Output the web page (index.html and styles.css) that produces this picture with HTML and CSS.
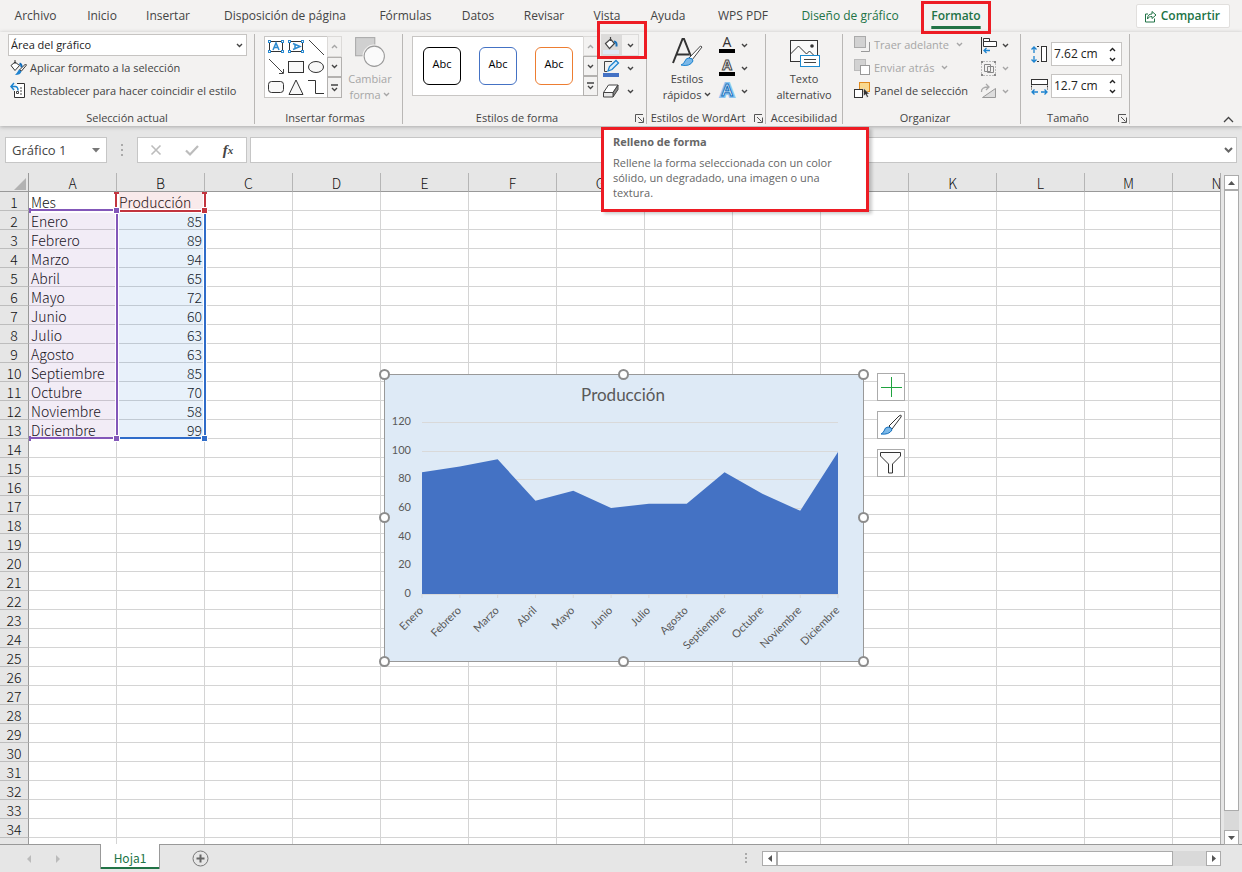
FILE: index.html
```html
<!DOCTYPE html>
<html lang="es">
<head>
<meta charset="utf-8">
<title>Hoja de cálculo</title>
<link rel="stylesheet" href="styles.css">
</head>
<body>
<svg class="defs" width="0" height="0" aria-hidden="true">
  <symbol id="chev" viewBox="0 0 7 5"><path d="M1 1l2.500 2.500L6 1" fill="none" stroke="currentColor" stroke-width="1.400"/></symbol>
  <symbol id="up" viewBox="0 0 7 5"><path d="M1 4l2.500-2.500L6 4" fill="none" stroke="currentColor" stroke-width="1.400"/></symbol>
  <symbol id="more" viewBox="0 0 9 8"><path d="M1 1h7M2 4l2.500 2.500L7 4" fill="none" stroke="currentColor" stroke-width="1.300"/></symbol>
  <symbol id="launch" viewBox="0 0 9 9"><path d="M.5 8V.5H8M3 3l4.500 4.500M8.500 3.500v5h-5" fill="none" stroke="#555"/></symbol>
</svg>
<div class="app">
  <header class="tabs">
    <nav class="tablist" aria-label="Cinta de opciones">
      <button>Archivo</button><button>Inicio</button><button>Insertar</button><button>Disposición de página</button><button>Fórmulas</button><button>Datos</button><button>Revisar</button><button>Vista</button><button>Ayuda</button><button>WPS PDF</button><button class="green">Diseño de gráfico</button><button class="active">Formato</button>
    </nav>
    <button class="share"><svg width="13" height="13" viewBox="0 0 13 13"><path d="M4 4H1.500v8h9V8.500M3.500 9c0-3.500 1.500-5 4.500-5V1.500L12 5 8 8.500V6.500C6 6.500 4.500 7 3.500 9z" fill="none" stroke="#217346"/></svg>Compartir</button>
  </header>

  <section class="ribbon">
    <div class="group g-sel">
      <div class="body">
        <div class="combo"><select aria-label="Elemento del gráfico"><option>Área del gráfico</option></select><svg width="7" height="5"><use href="#chev"/></svg></div>
        <button class="cmd"><svg width="17" height="17" viewBox="0 0 17 17"><path d="M5 1v4M1 6.500l4-3.500 4.500 3.500-4.500 5z" fill="#fff" stroke="#333"/><path d="M9.500 4.500q2.500 1 2 4" fill="none" stroke="#0f6cbd" stroke-width="2"/><path d="M15.500 5l1 1-5 6-2-1z" fill="#fff" stroke="#333"/><path d="M9 10.500l2.500 2q-1 3.500-6.500 3.500 2-2 4-5.500z" fill="#1f83d0"/></svg>Aplicar formato a la selección</button>
        <button class="cmd"><svg width="17" height="17" viewBox="0 0 17 17"><path d="M7 1.500h7.500v14h-10V9" fill="#fff" stroke="#333"/><path d="M1 4.500h4q3 0 3 4M4 1L1 4.500 4 8" fill="none" stroke="#1a83d0" stroke-width="1.500"/><path d="M10 6h2M6.500 9.500h2v2h-2zM10 12h2M10 9h2" fill="none" stroke="#444"/></svg>Restablecer para hacer coincidir el estilo</button>
      </div>
      <h2>Selección actual</h2>
    </div>

    <div class="group g-ins">
      <div class="body row">
        <div class="gallery shapes">
          <div class="cells">
            <svg width="20" height="20" viewBox="0 0 20 20"><rect x="3.500" y="4.500" width="13" height="10" fill="#fff" stroke="#333"/><g fill="#fff" stroke="#2b8ad0"><rect x="2.500" y="3.500" width="2" height="2"/><rect x="15.500" y="3.500" width="2" height="2"/><rect x="2.500" y="13.500" width="2" height="2"/><rect x="15.500" y="13.500" width="2" height="2"/></g><path d="M7 13l3-7 3 7M8 10.500h4" fill="none" stroke="#2b8ad0" stroke-width="1.500"/></svg>
            <svg width="20" height="20" viewBox="0 0 20 20"><rect x="3.500" y="4.500" width="13" height="10" fill="#fff" stroke="#333"/><g fill="#fff" stroke="#2b8ad0"><rect x="2.500" y="3.500" width="2" height="2"/><rect x="15.500" y="3.500" width="2" height="2"/><rect x="2.500" y="13.500" width="2" height="2"/><rect x="15.500" y="13.500" width="2" height="2"/></g><path d="M7 6.500l7 3-7 3M9 7.500v4" fill="none" stroke="#2b8ad0" stroke-width="1.500"/></svg>
            <svg width="20" height="20" viewBox="0 0 20 20"><path d="M3 3l15 15" stroke="#444"/></svg>
            <svg width="20" height="20" viewBox="0 0 20 20"><path d="M3 2l14 14M17.500 12v4.500H13" fill="none" stroke="#444"/></svg>
            <svg width="20" height="20" viewBox="0 0 20 20"><rect x="2.500" y="4.500" width="15" height="11" fill="#f8f8f8" stroke="#333"/></svg>
            <svg width="20" height="20" viewBox="0 0 20 20"><ellipse cx="10" cy="10" rx="7.500" ry="5.500" fill="#f8f8f8" stroke="#333"/></svg>
            <svg width="20" height="20" viewBox="0 0 20 20"><rect x="2.500" y="4.500" width="15" height="11" rx="3" fill="#f8f8f8" stroke="#333"/></svg>
            <svg width="20" height="20" viewBox="0 0 20 20"><path d="M10 3L3 17.500h14z" fill="#f8f8f8" stroke="#333"/></svg>
            <svg width="20" height="20" viewBox="0 0 20 20"><path d="M2 3.500h7.500v13H18" fill="none" stroke="#333"/></svg>
          </div>
          <div class="scroll"><button class="off" aria-label="Subir"><svg width="7" height="5"><use href="#up"/></svg></button><button aria-label="Bajar"><svg width="7" height="5"><use href="#chev"/></svg></button><button aria-label="Más"><svg width="9" height="8"><use href="#more"/></svg></button></div>
        </div>
        <button class="big off"><svg width="30" height="30" viewBox="0 0 30 30"><rect x="1.500" y="1.500" width="18" height="17" fill="#d0d0d0" stroke="#aaa"/><circle cx="19" cy="19" r="11" fill="#f3f2f1"/><circle cx="19" cy="19" r="9.500" fill="#fafafa" stroke="#999"/></svg><span>Cambiar<br>forma <svg width="7" height="5"><use href="#chev"/></svg></span></button>
      </div>
      <h2>Insertar formas</h2>
    </div>

    <div class="group g-sty">
      <div class="body row">
        <div class="gallery styles">
          <div class="cells"><button class="abc black">Abc</button><button class="abc blue">Abc</button><button class="abc orange">Abc</button></div>
          <div class="scroll"><button class="off" aria-label="Subir"><svg width="7" height="5"><use href="#up"/></svg></button><button aria-label="Bajar"><svg width="7" height="5"><use href="#chev"/></svg></button><button aria-label="Más"><svg width="9" height="8"><use href="#more"/></svg></button></div>
        </div>
        <div class="stack">
          <div class="split fill">
            <button aria-label="Relleno de forma"><svg width="18" height="18" viewBox="0 0 18 18"><path d="M8.500 1v4M3.500 7.500l5-4.500 4 4.500-5 5z" fill="#fff" stroke="#444" stroke-width="1.200"/><path d="M12 5.500q3 0 2.500 5" fill="none" stroke="#1c72b8" stroke-width="2"/><rect x="1" y="14" width="16" height="4" fill="#deeaf6"/></svg></button><button class="drop" aria-label="Opciones de relleno"><svg width="7" height="5"><use href="#chev"/></svg></button>
            <div class="mark"></div>
            <div class="tip" role="tooltip"><strong>Relleno de forma</strong><p>Rellene la forma seleccionada con un color sólido, un degradado, una imagen o una textura.</p></div>
          </div>
          <div class="split">
            <button aria-label="Contorno de forma"><svg width="18" height="18" viewBox="0 0 18 18"><path d="M10 2.500H2.500v10H5" fill="none" stroke="#444"/><path d="M6 12l1.500-4.500L14 1.500l2.500 2.500L10 10.500z" fill="#d9ecfa" stroke="#1c83cf" stroke-width="1.300"/><rect x="1" y="14" width="16" height="4" fill="#4472c4"/></svg></button><button class="drop" aria-label="Opciones de contorno"><svg width="7" height="5"><use href="#chev"/></svg></button>
          </div>
          <div class="split">
            <button aria-label="Efectos de forma"><svg width="18" height="18" viewBox="0 0 18 18"><path d="M1.500 10.500l5-7.500h9.500l-5 7.500z" fill="#fff" stroke="#444"/><path d="M11 10.500L16 3v4.500l-5 7.500z" fill="#888" stroke="#444"/><path d="M1.500 10.500H11V15H1.500z" fill="#e8e8e8" stroke="#444"/></svg></button><button class="drop" aria-label="Opciones de efectos"><svg width="7" height="5"><use href="#chev"/></svg></button>
          </div>
        </div>
      </div>
      <h2>Estilos de forma</h2><button class="launch" aria-label="Más opciones de forma"><svg width="9" height="9"><use href="#launch"/></svg></button>
    </div>

    <div class="group g-art">
      <div class="body row">
        <button class="big"><svg width="32" height="32" viewBox="0 0 32 32"><path d="M2 27L11.500 3h1.500l8 20M6 18.500h12" fill="none" stroke="#333" stroke-width="2"/><path d="M29.500 10l1.500 1-10 13-3-2z" fill="#fff" stroke="#444"/><path d="M18 22q4 0 4 3-3 6-12 4 3-1 4-4 1-3 4-3z" fill="#7bb8e8" stroke="#1c83cf"/></svg><span>Estilos<br>rápidos <svg width="7" height="5"><use href="#chev"/></svg></span></button>
        <div class="stack">
          <div class="split"><button aria-label="Relleno de texto"><svg width="18" height="18" viewBox="0 0 18 18"><text class="ltr" x="9" y="11" fill="#333">A</text><rect x="1" y="13" width="16" height="4"/></svg></button><button class="drop" aria-label="Opciones de relleno de texto"><svg width="7" height="5"><use href="#chev"/></svg></button></div>
          <div class="split"><button aria-label="Contorno de texto"><svg width="18" height="18" viewBox="0 0 18 18"><text class="ltr heavy" x="9" y="11" fill="#fff" stroke="#444">A</text><rect x="1" y="13" width="16" height="4"/></svg></button><button class="drop" aria-label="Opciones de contorno de texto"><svg width="7" height="5"><use href="#chev"/></svg></button></div>
          <div class="split"><button aria-label="Efectos de texto"><svg width="18" height="18" viewBox="0 0 18 18"><text class="ltr large" x="9" y="14" fill="#fff" stroke="#8bc4f0" stroke-width="4">A</text><text class="ltr large" x="9" y="14" fill="#fff" stroke="#1671bd">A</text></svg></button><button class="drop" aria-label="Opciones de efectos de texto"><svg width="7" height="5"><use href="#chev"/></svg></button></div>
        </div>
      </div>
      <h2>Estilos de WordArt</h2><button class="launch" aria-label="Más opciones de WordArt"><svg width="9" height="9"><use href="#launch"/></svg></button>
    </div>

    <div class="group g-acc">
      <div class="body row">
        <button class="big"><svg width="32" height="32" viewBox="0 0 32 32"><rect x="2.500" y="4.500" width="27" height="21" fill="#fafafa" stroke="#333"/><path d="M2.500 18l8-8 8 8 3-3 4 4" fill="none" stroke="#333"/><circle cx="24" cy="10" r="1.800" fill="#333"/><rect x="12.500" y="19.500" width="19" height="11" fill="#fff" stroke="#1c8ad0"/><path d="M16 23.500h12M16 26.500h12" stroke="#444"/></svg><span>Texto<br>alternativo</span></button>
      </div>
      <h2>Accesibilidad</h2>
    </div>

    <div class="group g-org">
      <div class="body row">
        <div class="stack wide">
          <button class="cmd off"><svg width="17" height="17" viewBox="0 0 17 17"><path d="M7 15.500h8.500V6" fill="none" stroke="#999"/><rect x=".5" y=".5" width="11" height="11" fill="#d2d2d2" stroke="#aaa"/></svg>Traer adelante <svg class="ch" width="7" height="5"><use href="#chev"/></svg></button>
          <button class="cmd off"><svg width="17" height="17" viewBox="0 0 17 17"><rect x=".5" y=".5" width="11" height="11" fill="#d2d2d2" stroke="#bbb"/><rect x="6.500" y="6.500" width="9" height="9" fill="#fff" stroke="#999"/></svg>Enviar atrás <svg class="ch" width="7" height="5"><use href="#chev"/></svg></button>
          <button class="cmd"><svg width="17" height="17" viewBox="0 0 17 17"><rect x="5.500" y=".5" width="10" height="9" fill="#f9d98e" stroke="#e08a1e"/><rect x=".5" y="7.500" width="8" height="8" fill="#fff" stroke="#333"/><path d="M9.500 6v8l2-1.500 1.500 3 1.500-1-1.500-2.500h2.500z" fill="#333" stroke="#fff" stroke-width=".5"/></svg>Panel de selección</button>
        </div>
        <div class="stack">
          <div class="split"><button aria-label="Alinear"><svg width="17" height="17" viewBox="0 0 17 17"><path d="M1.500 0v17M3.500 1.500h6v3h-6zM3.500 4.500h13v5h-13z" fill="#fff" stroke="#333"/><path d="M4 13.500h6M6.500 11L4 13.500 6.500 16" fill="none" stroke="#1c83cf" stroke-width="1.300"/></svg></button><button class="drop" aria-label="Opciones de alinear"><svg width="7" height="5"><use href="#chev"/></svg></button></div>
          <div class="split off"><button aria-label="Agrupar"><svg width="17" height="17" viewBox="0 0 17 17"><path d="M3 1.500h11M3 15.500h11M1.500 3v11M15.500 3v11" stroke="#bbb" stroke-dasharray="2 1"/><path d="M1 1h2v2H1zM14 1h2v2h-2zM1 14h2v2H1zM14 14h2v2h-2z" fill="#888"/><path d="M4.500 4.500h6v7h-6zM7.500 6.500h6v6h-6z" fill="none" stroke="#888"/></svg></button><button class="drop" aria-label="Opciones de agrupar"><svg width="7" height="5"><use href="#chev"/></svg></button></div>
          <div class="split off"><button aria-label="Girar"><svg width="17" height="17" viewBox="0 0 17 17"><path d="M1.500 9Q1 4 8.500 4M6 1l3 3-3 3" fill="none" stroke="#aaa" stroke-width="1.300"/><path d="M2.500 14.500l13-9v9z" fill="#ddd" stroke="#999"/></svg></button><button class="drop" aria-label="Opciones de girar"><svg width="7" height="5"><use href="#chev"/></svg></button></div>
        </div>
      </div>
      <h2>Organizar</h2>
    </div>

    <div class="group g-size">
      <div class="body sizes">
        <label class="size"><svg width="17" height="17" viewBox="0 0 17 17"><path d="M3 1v6M3 10v6M.5 3.500L3 1l2.500 2.500M.5 13.500L3 16l2.500-2.500" fill="none" stroke="#1c83cf" stroke-width="1.300"/><path d="M6 .5h3M6 15.500h3" stroke="#333" stroke-dasharray="2 1"/><rect x="10.500" y=".5" width="5" height="15" fill="#fff" stroke="#333"/></svg><span class="num"><input value="7.62 cm" aria-label="Alto de forma"><span class="spin"><svg width="7" height="5"><use href="#up"/></svg><svg width="7" height="5"><use href="#chev"/></svg></span></span></label>
        <label class="size"><svg width="17" height="17" viewBox="0 0 17 17"><rect x=".5" y="1.500" width="16" height="5" fill="#fff" stroke="#333"/><path d="M.5 7.500v4M16.500 7.500v4" stroke="#333" stroke-dasharray="2 1"/><path d="M1 14h6M10 14h6M3.500 11.500L1 14l2.500 2.500M13.500 11.500L16 14l-2.500 2.500" fill="none" stroke="#1c83cf" stroke-width="1.300"/></svg><span class="num"><input value="12.7 cm" aria-label="Ancho de forma"><span class="spin"><svg width="7" height="5"><use href="#up"/></svg><svg width="7" height="5"><use href="#chev"/></svg></span></span></label>
      </div>
      <h2>Tamaño</h2><button class="launch" aria-label="Más opciones de tamaño"><svg width="9" height="9"><use href="#launch"/></svg></button>
    </div>
    <button class="collapse" aria-label="Contraer la cinta"><svg width="11" height="7" viewBox="0 0 11 7"><path d="M1 6l4.500-4.500L10 6" fill="none" stroke="#444" stroke-width="1.300"/></svg></button>
  </section>

  <section class="formula">
    <div class="namebox"><input value="Gráfico 1" aria-label="Cuadro de nombres"><svg width="8" height="5" viewBox="0 0 8 5"><path d="M0 0h8L4 4.500z" fill="#777"/></svg></div>
    <svg class="dots" width="3" height="12" viewBox="0 0 3 12"><path d="M0 0h2v2H0zM0 5h2v2H0zM0 10h2v2H0z" fill="#aaa"/></svg>
    <div class="fxbox">
      <button aria-label="Cancelar"><svg width="12" height="12" viewBox="0 0 12 12"><path d="M1.500 1.500l9 9M10.500 1.500l-9 9" stroke="#bcbcbc" stroke-width="1.600"/></svg></button>
      <button aria-label="Introducir"><svg width="14" height="12" viewBox="0 0 14 12"><path d="M1 6.500l4 4L13 2" fill="none" stroke="#bcbcbc" stroke-width="2.200"/></svg></button>
      <button class="fx" aria-label="Insertar función">f<sub>x</sub></button>
    </div>
    <div class="fbar"><input aria-label="Barra de fórmulas"><svg width="9" height="6" viewBox="0 0 9 6"><path d="M1 1l3.500 3.500L8 1" fill="none" stroke="#666" stroke-width="2"/></svg></div>
  </section>

  <main class="work">
    <div class="sheet">
      <table id="grid"></table>
      <svg class="ranges" width="220" height="280" viewBox="0 0 220 280">
        <rect x="29" y="38" width="88" height="228" fill="#7030a0" fill-opacity=".09"/>
        <rect x="117" y="38" width="88" height="228" fill="#2f7cd0" fill-opacity=".11"/>
        <rect x="117" y="19" width="88" height="19" fill="#c0303c" fill-opacity=".1"/>
        <g fill="none" stroke="#fff" stroke-width="4"><path d="M29 38H117V266H29M117 266H205V38M117 19V38H205V19"/></g>
        <g fill="none" stroke-width="2"><path d="M29 37H117V265H29" stroke="#8357b9"/><path d="M118 265H205V38" stroke="#2f6cc9"/><path d="M116 19V38H205V19" stroke="#c2353f"/></g>
        <g stroke="#fff"><path d="M113.500 262.500h6v6h-6zM113.500 34.500h6v6h-6z" fill="#8357b9"/><path d="M201.500 262.500h6v6h-6z" fill="#2f6cc9"/><path d="M201.500 34.500h6v6h-6z" fill="#c2353f"/></g>
        <path d="M29 35h2v5h-2zM29 263h2v5h-2z" fill="#8357b9"/><path d="M114 19h5v2h-5zM202 19h5v2h-5z" fill="#c2353f"/>
      </svg>
      <div class="chart">
        <svg id="chart" width="490" height="298" viewBox="-5 -5 490 298" role="img" aria-label="Gráfico de áreas Producción"></svg>
        <div class="tools">
          <button aria-label="Elementos de gráfico"><svg width="22" height="22" viewBox="0 0 22 22"><path d="M11 1h1v20h-1zM1 11h21v1H1z" fill="#1fa33f"/></svg></button>
          <button aria-label="Estilos de gráfico"><svg width="24" height="22" viewBox="0 0 24 22"><path d="M10 12L20 2q3-2 2 1l-9 12z" fill="#fff" stroke="#333"/><path d="M9 13q4 0 4 3-3 5-11 4 2-1 3-3 1-4 4-4z" fill="#7bb8e8" stroke="#1671bd"/></svg></button>
          <button aria-label="Filtros de gráfico"><svg width="22" height="22" viewBox="0 0 22 22"><path d="M.5 .5h20V4l-8 8v9h-4v-9l-8-8z" fill="#fafafa" stroke="#333"/></svg></button>
        </div>
      </div>
    </div>
    <div class="vbar"><button aria-label="Subir"><svg width="7" height="4" viewBox="0 0 7 4"><path d="M0 4h7L3.500 0z" fill="#555"/></svg></button><div class="track"><div class="thumb"></div></div><button aria-label="Bajar"><svg width="7" height="4" viewBox="0 0 7 4"><path d="M0 0h7L3.500 4z" fill="#555"/></svg></button></div>
  </main>

  <footer class="bottom">
    <div class="navs"><svg width="34" height="8" viewBox="0 0 34 8"><path d="M4 0v8L0 4zM29 0v8l4-4z" fill="#bbb"/></svg></div>
    <button class="sheet-tab">Hoja1</button>
    <button class="add" aria-label="Hoja nueva"><svg width="17" height="17" viewBox="0 0 17 17"><circle cx="8.500" cy="8.500" r="7.500" fill="none" stroke="#777"/><path d="M8.500 4.500v8M4.500 8.500h8" stroke="#666" stroke-width="2"/></svg></button>
    <svg class="dots" width="3" height="12" viewBox="0 0 3 12"><path d="M0 0h2v2H0zM0 4h2v2H0zM0 8h2v2H0z" fill="#aaa"/></svg>
    <div class="hbar"><button aria-label="Izquierda"><svg width="4" height="7" viewBox="0 0 4 7"><path d="M4 0v7L0 3.500z" fill="#555"/></svg></button><div class="track"><div class="thumb"></div></div><button aria-label="Derecha"><svg width="4" height="7" viewBox="0 0 4 7"><path d="M0 0v7l4-3.500z" fill="#555"/></svg></button></div>
  </footer>
</div>
<script src="app.js"></script>
</body>
</html>
```

FILE: styles.css
```css
* { box-sizing: border-box; }
body { margin: 0; font: 11px/16px "Open Sans", "Noto Sans", sans-serif; color: #444; background: #e6e6e6; }
button, input, select { font: inherit; color: inherit; margin: 0; padding: 0; border: 0; background: none; border-radius: 0; outline: 0; }
button { display: flex; align-items: center; justify-content: center; white-space: nowrap; }
svg { flex: none; overflow: visible; }
.defs { position: absolute; }
.app { height: 100vh; display: flex; flex-direction: column; overflow: hidden; }
.off { color: #a6a6a6; }

.tabs { display: flex; justify-content: space-between; background: #f3f2f1; height: 32px; padding-right: 12px; flex: none; }
.tablist { display: grid; grid-template-columns: 71px 62px 70px 164px 77px 68px 64px 62px 60px 90px 124px 79px; font-size: 12px; }
.tablist .green { color: #217346; }
.tablist .active { color: #217346; font-weight: 600; outline: 3px solid #ed1c24; outline-offset: -3px; margin: 1px 0 -2px 9px; z-index: 2; padding-bottom: 3px; text-decoration: underline 3px #217346; text-underline-offset: 6px; position: relative; }
.share { align-self: center; height: 24px; padding: 0 9px 0 7px; gap: 4px; background: #fff; border: 1px solid #e1dfdd; border-radius: 2px; color: #217346; font-size: 12px; font-weight: 600; }

.ribbon { position: relative; z-index: 1; display: flex; background: #f3f2f1; height: 94px; flex: none; box-shadow: 0 1px 4px #aaa; }
.group { position: relative; display: flex; flex-direction: column; height: 90px; margin-top: 2px; border-right: 1px solid #b9b7b5; flex: none; }
.group h2 { margin: 0; font: inherit; text-align: center; height: 16px; line-height: 16px; white-space: nowrap; }
.body { height: 76px; flex: none; }
.row { display: flex; }
.g-sel { width: 255px; padding-left: 8px; }
.g-sel h2 { padding-right: 8px; }
.g-ins { width: 148px; padding-left: 9px; }
.g-ins h2 { padding-right: 16px; }
.g-sty { width: 244px; padding-left: 9px; }
.g-sty h2 { padding-right: 24px; }
.g-art { width: 119px; }
.g-art h2 { padding-right: 16px; }
.g-acc { width: 77px; }
.g-org { width: 178px; padding-left: 11px; }
.g-org h2 { padding-right: 24px; }
.g-size { width: 109px; padding-left: 10px; }
.g-size h2 { padding-right: 24px; }
.combo { position: relative; width: 239px; height: 22px; background: #fff; border: 1px solid #c6c4c2; }
.combo select { appearance: none; width: 100%; height: 100%; padding-left: 2px; color: #222; }
.combo svg { position: absolute; right: 3px; top: 8px; }
.cmd { height: 23px; gap: 3px; padding-left: 2px; justify-content: flex-start; }
.ch { margin-left: 4px; }
.gallery { display: flex; margin-top: 2px; border: 1px solid #c8c6c4; background: #fff; height: 62px; }
.styles { height: 60px; }
.shapes .cells { display: grid; grid-template-columns: repeat(3, 20px); width: 62px; padding-left: 1px; }
.styles .cells { display: flex; gap: 18px; padding: 10px; width: 170px; }
.scroll { display: grid; grid-template-rows: repeat(3, 1fr); width: 15px; margin: -1px -1px -1px 0; }
.scroll button { border: 1px solid #b3b1af; background: #f3f2f1; }
.scroll .off { border-color: #dcdad8; }
.abc { width: 38px; height: 38px; border: 1px solid; border-radius: 6px; color: #000; padding-bottom: 4px; flex: none; }
.black { border-color: #000; }
.blue { border-color: #4472c4; }
.orange { border-color: #ed7d31; }
.big { flex-direction: column; justify-content: flex-start; padding-top: 2px; width: 56px; }
.big > svg { width: 32px; height: 32px; margin-bottom: 3px; }
.big span svg { vertical-align: 2px; }
.g-art .big { width: 60px; margin-left: 10px; }
.g-acc .big { width: 76px; }
.stack { display: flex; flex-direction: column; }
.g-org .wide { width: 124px; }
.wide .cmd { padding: 0 0 2px; }
.g-sty .stack { margin-left: 3px; }
.split { position: relative; display: flex; height: 23px; padding-bottom: 1px; }
.split button { width: 20px; }
.split .drop { width: 14px; }
.g-sty .split .drop { width: 18px; }
.fill button { background: #dcdbda; }
.fill .drop { background: #f3f2f1; border: 1px solid #dcdbda; }
.mark { position: absolute; left: -4px; top: -13px; width: 50px; height: 38px; border: 3px solid #ed1c24; z-index: 3; }
.tip { position: absolute; left: 0; top: 93px; width: 268px; height: 85px; border: 3px solid #ed1c24; background: #fff; padding: 4px 9px; color: #666; z-index: 4; line-height: 15px; box-shadow: 3px 2px 3px #0003; }
.tip strong { display: block; }
.tip p { margin: 6px 0 0; }
.launch { position: absolute; right: 2px; bottom: 1px; width: 10px; height: 10px; }
.ltr { font: 14px "Open Sans", sans-serif; text-anchor: middle; }
.heavy { font-weight: 700; }
.large { font-size: 17px; font-weight: 600; }
.sizes { display: flex; flex-direction: column; gap: 8px; padding-top: 8px; }
.size { display: flex; align-items: center; gap: 3px; }
.num { display: flex; width: 71px; height: 24px; border: 1px solid #c6c4c2; background: #fff; align-items: center; color: #222; }
.num input { width: 57px; padding-left: 2px; font-size: 12px; }
.spin { display: flex; flex-direction: column; gap: 5px; }
.collapse { margin: auto 8px 3px auto; }

.formula { display: flex; align-items: center; height: 47px; padding: 1px 5px 0; flex: none; color: #444; }
.formula > div { display: flex; align-items: center; height: 26px; background: #fff; border: 1px solid #c6c6c6; }
.namebox { width: 102px; padding: 0 6px; justify-content: space-between; }
.namebox input { width: 70px; font-size: 13px; }
.formula .dots { margin: 0 13px 0 14px; }
.fxbox { width: 110px; }
.fxbox button { width: 36px; }
.fx { font: italic bold 15px/16px "Liberation Serif", serif; }
.fx sub { font-size: 11px; line-height: 8px; }
.formula .fbar { flex: 1; margin-left: 3px; padding-right: 3px; }
.fbar input { flex: 1; }

.work { flex: 1; display: flex; min-height: 0; }
.sheet { position: relative; flex: 1; overflow: hidden; background: #fff; border-right: 1px solid #ababab; }
table { border-collapse: separate; border-spacing: 0; table-layout: fixed; width: 1261px; font: 300 14px/17px "Noto Sans CJK SC", sans-serif; color: #111; }
th { font-weight: 300; background: #e6e6e6; height: 19px; padding: 0; border-right: 1px solid #b5b5b5; border-bottom: 1px solid #bdbdbd; }
thead th { border-bottom-color: #999; width: 88px; }
thead th:first-child { width: 29px; }
tbody th, thead th:first-child { border-right-color: #999; }
td { height: 19px; padding: 0 2px; border-right: 1px solid #d4d4d4; border-bottom: 1px solid #d4d4d4; white-space: nowrap; }
th div, td div { height: 18px; line-height: 20px; }
.num-cell { text-align: right; }
.corner svg { display: block; margin: 3px 0 0 14px; }
.ranges { position: absolute; left: 0; top: 0; }
.chart { position: absolute; left: 379px; top: 196px; display: flex; gap: 8px; align-items: flex-start; }
.chart text { font-family: Lato, sans-serif; fill: #595959; font-size: 11px; }
.chart .title { font-size: 17px; text-anchor: middle; }
.chart .end { text-anchor: end; }
.tools { display: grid; gap: 10px; padding-top: 4px; }
.tools button { width: 28px; height: 28px; border: 1px solid #ababab; background: #fff; }
.vbar { width: 21px; padding: 2px 3px 0; margin-bottom: -1px; display: flex; flex-direction: column; z-index: 1; }
.vbar button, .hbar button { width: 15px; height: 15px; border: 1px solid #ababab; background: #fff; flex: none; }
.track { flex: 1; background: #d9d9d9; }
.thumb { background: #fff; border: 1px solid #ababab; }
.vbar .thumb { height: 97%; }
.hbar .thumb { width: 396px; height: 15px; }
.bottom { position: relative; display: flex; align-items: center; height: 28px; flex: none; border-top: 1px solid #999; background: #e6e6e6; }
.navs { width: 100px; padding-left: 27px; }
.navs svg { display: block; }
.sheet-tab { width: 60px; height: 25px; align-self: flex-start; margin-top: -1px; padding-top: 2px; background: #fff; border: solid #999; border-width: 0 1px; box-shadow: inset 0 -2px #217346; color: #217346; font: 12px/16px "Noto Sans CJK SC", sans-serif; }
.add { margin: 0 auto 0 32px; }
.hbar { display: flex; width: 459px; margin: 0 21px 0 14px; }
```

FILE: app.js
```js
const rows = [["Mes", "Producción"], ["Enero", 85], ["Febrero", 89], ["Marzo", 94], ["Abril", 65], ["Mayo", 72], ["Junio", 60], ["Julio", 63], ["Agosto", 63], ["Septiembre", 85], ["Octubre", 70], ["Noviembre", 58], ["Diciembre", 99]];
const letters = [..."ABCDEFGHIJKLMN"];

// Spreadsheet grid
let html = '<thead><tr><th class="corner" aria-label="Seleccionar todo"><svg width="12" height="12" viewBox="0 0 12 12"><path d="M12 0v12H0z" fill="#b2b2b2"/></svg></th>';
html += letters.map(l => `<th scope="col"><div>${l}</div></th>`).join("") + "</tr></thead><tbody>";
for (let r = 0; r < 35; r++) {
  html += `<tr><th scope="row"><div>${r + 1}</div></th>`;
  for (let c = 0; c < letters.length; c++) {
    const v = rows[r] && rows[r][c] !== undefined ? rows[r][c] : "";
    html += `<td${typeof v === "number" ? ' class="num-cell"' : ""}><div>${v}</div></td>`;
  }
  html += "</tr>";
}
document.getElementById("grid").innerHTML = html + "</tbody>";

// Area chart
const left = 38, base = 220, step = 416 / 11, unit = 172 / 120;
const data = rows.slice(1);
let s = '<rect x=".5" y=".5" width="479" height="287" fill="#deeaf6" stroke="#999"/>';
s += '<text class="title" x="239" y="27">Producción</text>';
for (let v = 0; v <= 120; v += 20) {
  const y = Math.round(base - v * unit);
  s += `<path d="M${left} ${y + 0.5}h416" stroke="#d9d9d9"/><text class="end" x="27" y="${y + 3}">${v}</text>`;
}
const pts = data.map((d, i) => `${left + i * step},${base - d[1] * unit}`).join(" ");
s += `<polygon points="${left},${base} ${pts} ${left + 416},${base}" fill="#4472c4"/>`;
data.forEach((d, i) => {
  const x = left + i * step;
  s += `<path d="M${x} ${base}v4" stroke="#d9d9d9"/><text class="end" transform="translate(${x + 2} ${base + 17}) rotate(-45)">${d[0]}</text>`;
});
for (const x of [0, 239, 479]) for (const y of [0, 143, 287]) {
  if (x !== 239 || y !== 143) s += `<circle cx="${x + 0.5}" cy="${y + 0.5}" r="4.500" fill="#fff" stroke="#8c8c8c" stroke-width="2"/>`;
}
document.getElementById("chart").innerHTML = s;
```
